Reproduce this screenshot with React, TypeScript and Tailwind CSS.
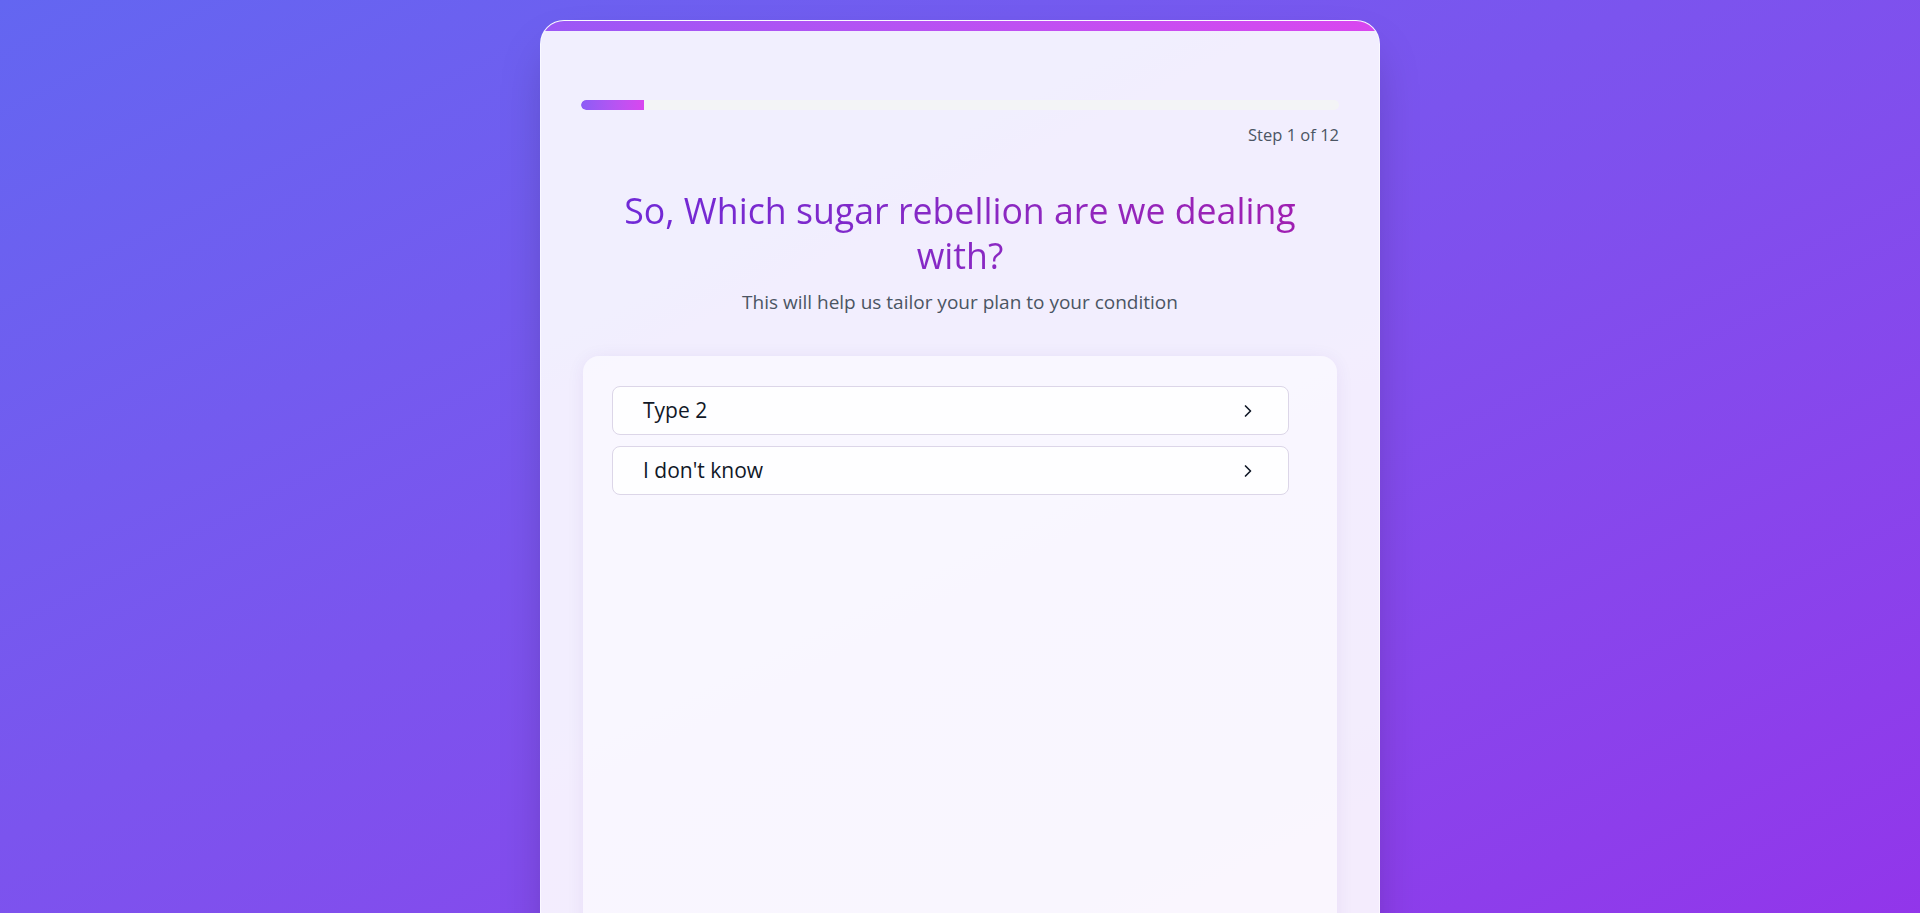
import React, { useState } from 'react';
import { ChevronRight } from 'lucide-react';

const TOTAL_STEPS = 12;

const options = ['Type 2', "I don't know"];

const App: React.FC = () => {
  const [step] = useState(1);
  const progress = (step / TOTAL_STEPS) * 100;

  return (
    <div
      className="min-h-screen bg-gradient-to-br from-[#6366f1] to-[#9333ea] pt-5 overflow-hidden"
      style={{ fontFamily: '"Open Sans", "Noto Sans", sans-serif' }}
    >
      <div className="mx-auto w-[840px] min-h-[960px] rounded-3xl border border-white/60 bg-white/90 shadow-2xl overflow-hidden">
        <div className="h-2.5 bg-gradient-to-r from-[#9b57f6] to-[#d946ef]" />

        <div className="px-10 pt-[69px]">
          <div className="h-2.5 w-full rounded-full bg-[#f3f4f6] overflow-hidden">
            <div
              className="h-full rounded-l-full bg-gradient-to-r from-[#8b5cf6] to-[#d946ef]"
              style={{ width: `${progress}%` }}
            />
          </div>
          <div className="mt-[13px] text-right text-[16.5px] leading-6 text-[#4b5563]">
            Step {step} of {TOTAL_STEPS}
          </div>

          <h1 className="mt-[41px] text-center text-[35.7px] leading-[45px] bg-gradient-to-r from-[#6d28d9] to-[#a21caf] bg-clip-text text-transparent">
            So, Which sugar rebellion are we dealing with?
          </h1>
          <p className="mt-2.5 text-center text-[19px] leading-7 text-[#4b5563]">
            This will help us tailor your plan to your condition
          </p>

          <section className="mx-[2px] mt-10 min-h-[600px] rounded-2xl bg-white/50 pl-[29px] pr-[48px] pt-[30px] shadow-[0_2px_18px_rgba(76,29,149,0.07)]">
            <div className="flex flex-col gap-[11px]">
              {options.map((option) => (
                <button
                  key={option}
                  type="button"
                  className="flex h-[49px] w-full items-center justify-between rounded-lg border border-[#dcd6e8] bg-white/90 px-[30px] text-left text-[21px] text-[#111827]"
                >
                  <span>{option}</span>
                  <ChevronRight className="h-5 w-5 text-[#111827]" strokeWidth={2} />
                </button>
              ))}
            </div>
          </section>
        </div>
      </div>
    </div>
  );
};

export default App;
